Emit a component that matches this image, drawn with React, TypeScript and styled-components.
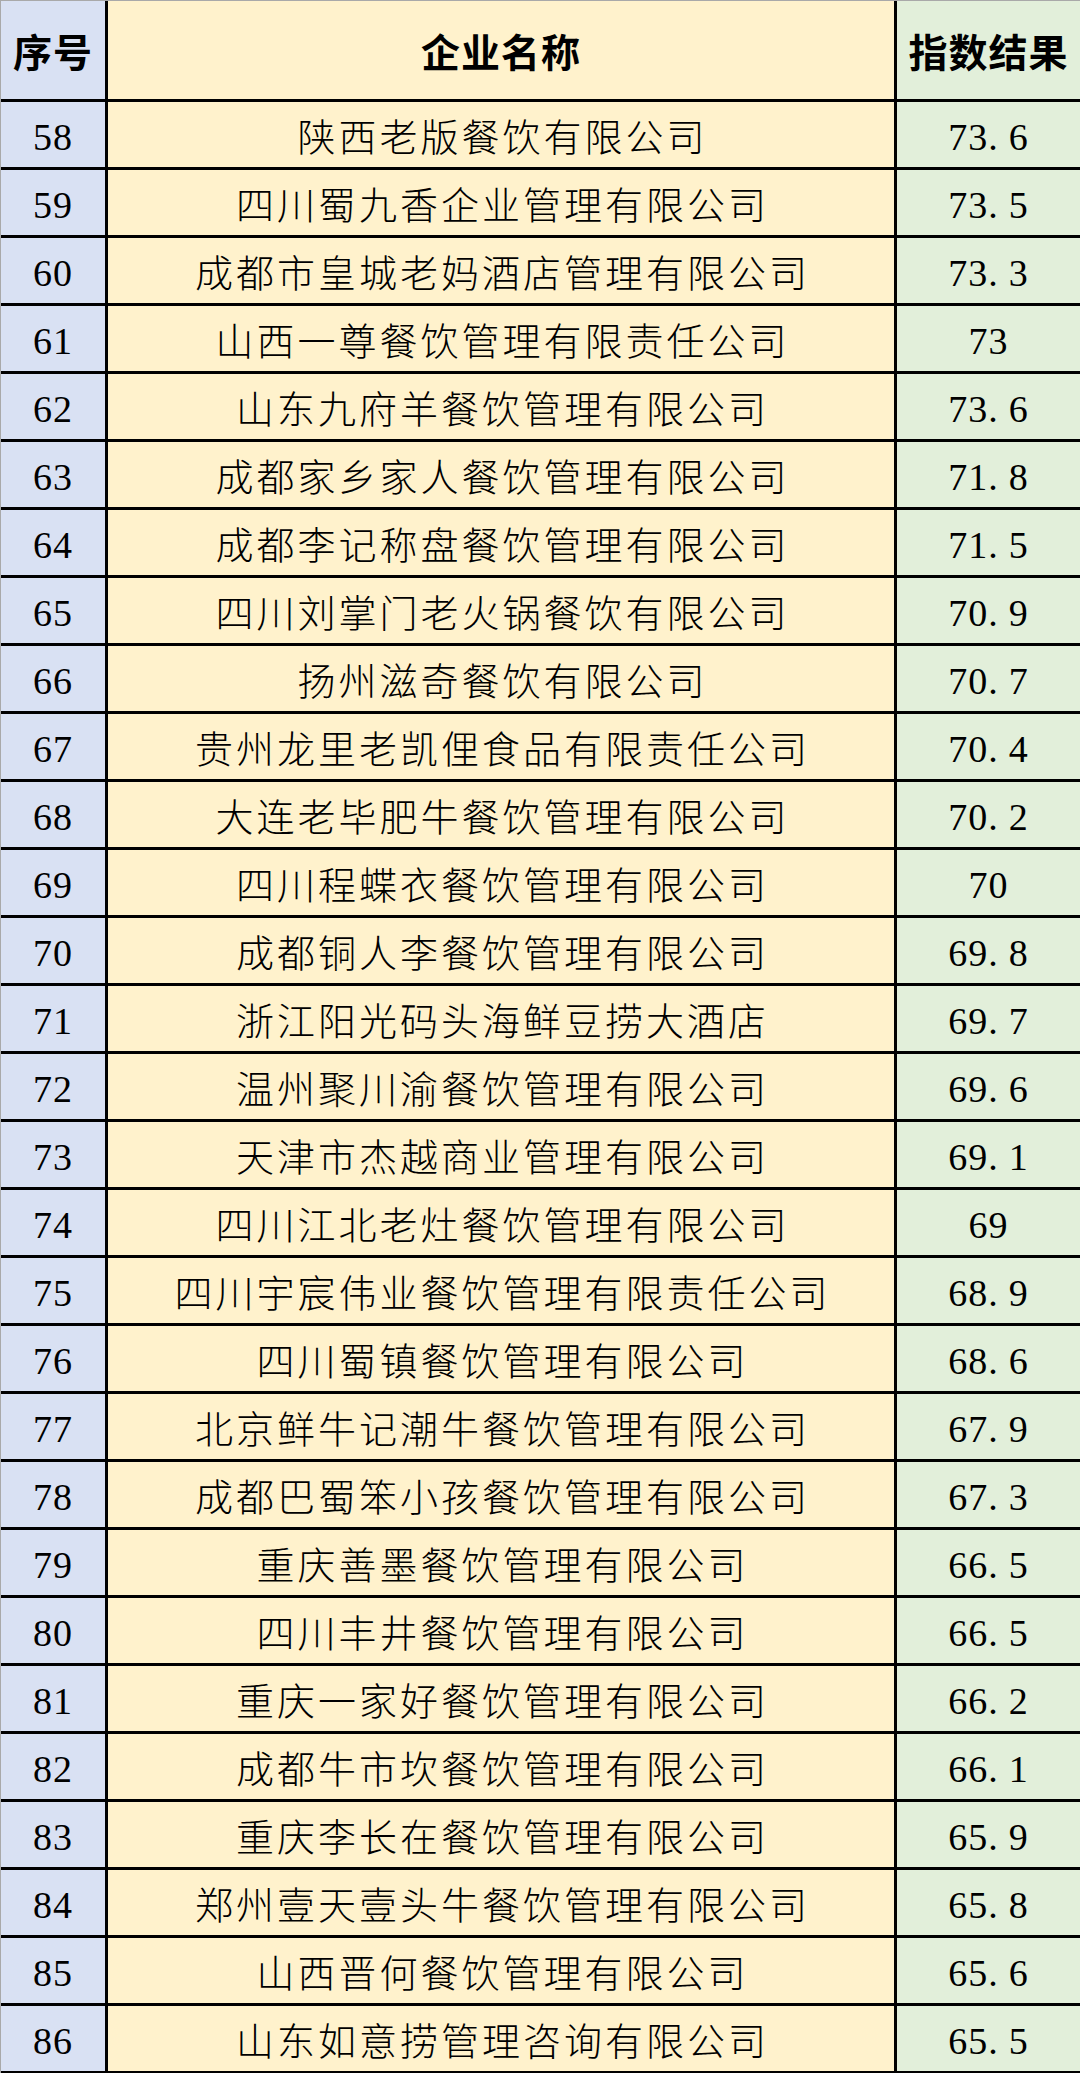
import styled, { createGlobalStyle } from 'styled-components';

const rows: [number, string, string][] = [
  [58, '陕西老版餐饮有限公司', '73.6'],
  [59, '四川蜀九香企业管理有限公司', '73.5'],
  [60, '成都市皇城老妈酒店管理有限公司', '73.3'],
  [61, '山西一尊餐饮管理有限责任公司', '73'],
  [62, '山东九府羊餐饮管理有限公司', '73.6'],
  [63, '成都家乡家人餐饮管理有限公司', '71.8'],
  [64, '成都李记称盘餐饮管理有限公司', '71.5'],
  [65, '四川刘掌门老火锅餐饮有限公司', '70.9'],
  [66, '扬州滋奇餐饮有限公司', '70.7'],
  [67, '贵州龙里老凯俚食品有限责任公司', '70.4'],
  [68, '大连老毕肥牛餐饮管理有限公司', '70.2'],
  [69, '四川程蝶衣餐饮管理有限公司', '70'],
  [70, '成都铜人李餐饮管理有限公司', '69.8'],
  [71, '浙江阳光码头海鲜豆捞大酒店', '69.7'],
  [72, '温州聚川渝餐饮管理有限公司', '69.6'],
  [73, '天津市杰越商业管理有限公司', '69.1'],
  [74, '四川江北老灶餐饮管理有限公司', '69'],
  [75, '四川宇宸伟业餐饮管理有限责任公司', '68.9'],
  [76, '四川蜀镇餐饮管理有限公司', '68.6'],
  [77, '北京鲜牛记潮牛餐饮管理有限公司', '67.9'],
  [78, '成都巴蜀笨小孩餐饮管理有限公司', '67.3'],
  [79, '重庆善墨餐饮管理有限公司', '66.5'],
  [80, '四川丰井餐饮管理有限公司', '66.5'],
  [81, '重庆一家好餐饮管理有限公司', '66.2'],
  [82, '成都牛市坎餐饮管理有限公司', '66.1'],
  [83, '重庆李长在餐饮管理有限公司', '65.9'],
  [84, '郑州壹天壹头牛餐饮管理有限公司', '65.8'],
  [85, '山西晋何餐饮管理有限公司', '65.6'],
  [86, '山东如意捞管理咨询有限公司', '65.5'],
];

const GlobalStyle = createGlobalStyle`
  html, body {
    margin: 0;
    padding: 0;
    background: #ffffff;
  }
`;

const Sheet = styled.div`
  display: grid;
  grid-template-columns: 104px 786px 1fr;
  grid-template-rows: 98px;
  grid-auto-rows: 65px;
  gap: 3px;
  width: 1080px;
  box-sizing: border-box;
  background: #000;
  border-top: 1px solid #a9a9a9;
  border-left: 1px solid #a9a9a9;
  padding-bottom: 2px;
`;

type Tone = 'blue' | 'yellow' | 'green';

const tones: Record<Tone, string> = {
  blue: '#d9e1f3',
  yellow: '#fff2cc',
  green: '#e2efda',
};

const Cell = styled.div<{ $tone: Tone }>`
  display: flex;
  align-items: center;
  justify-content: center;
  background: ${(p) => tones[p.$tone]};
  color: #000;
  white-space: nowrap;
  overflow: hidden;
`;

const HeadCell = styled(Cell)`
  font-family: 'Noto Sans CJK SC', sans-serif;
  font-weight: 700;
  font-size: 39px;
  letter-spacing: 1px;
`;

const NameCell = styled(Cell)`
  font-family: 'Noto Sans CJK SC', sans-serif;
  font-weight: 300;
  font-size: 38px;
  letter-spacing: 3px;
  padding-left: 3px;
`;

const NumCell = styled(Cell)`
  font-family: 'Liberation Serif', serif;
  font-size: 38px;
  letter-spacing: 1px;
  padding-top: 4px;
`;

// SimSun-style half-width period: the dot sits at the left of a full digit slot
const Dot = styled.span`
  letter-spacing: 11px;
`;

function Score({ value }: { value: string }) {
  const [whole, frac] = value.split('.');
  if (frac === undefined) return <>{whole}</>;
  return (
    <>
      {whole}
      <Dot>.</Dot>
      {frac}
    </>
  );
}

function Row({ no, name, score }: { no: number; name: string; score: string }) {
  return (
    <>
      <NumCell $tone="blue">{no}</NumCell>
      <NameCell $tone="yellow">{name}</NameCell>
      <NumCell $tone="green">
        <Score value={score} />
      </NumCell>
    </>
  );
}

export default function App() {
  return (
    <>
      <GlobalStyle />
      <Sheet>
        <HeadCell $tone="blue">序号</HeadCell>
        <HeadCell $tone="yellow">企业名称</HeadCell>
        <HeadCell $tone="green">指数结果</HeadCell>
        {rows.map(([no, name, score]) => (
          <Row key={no} no={no} name={name} score={score} />
        ))}
      </Sheet>
    </>
  );
}
